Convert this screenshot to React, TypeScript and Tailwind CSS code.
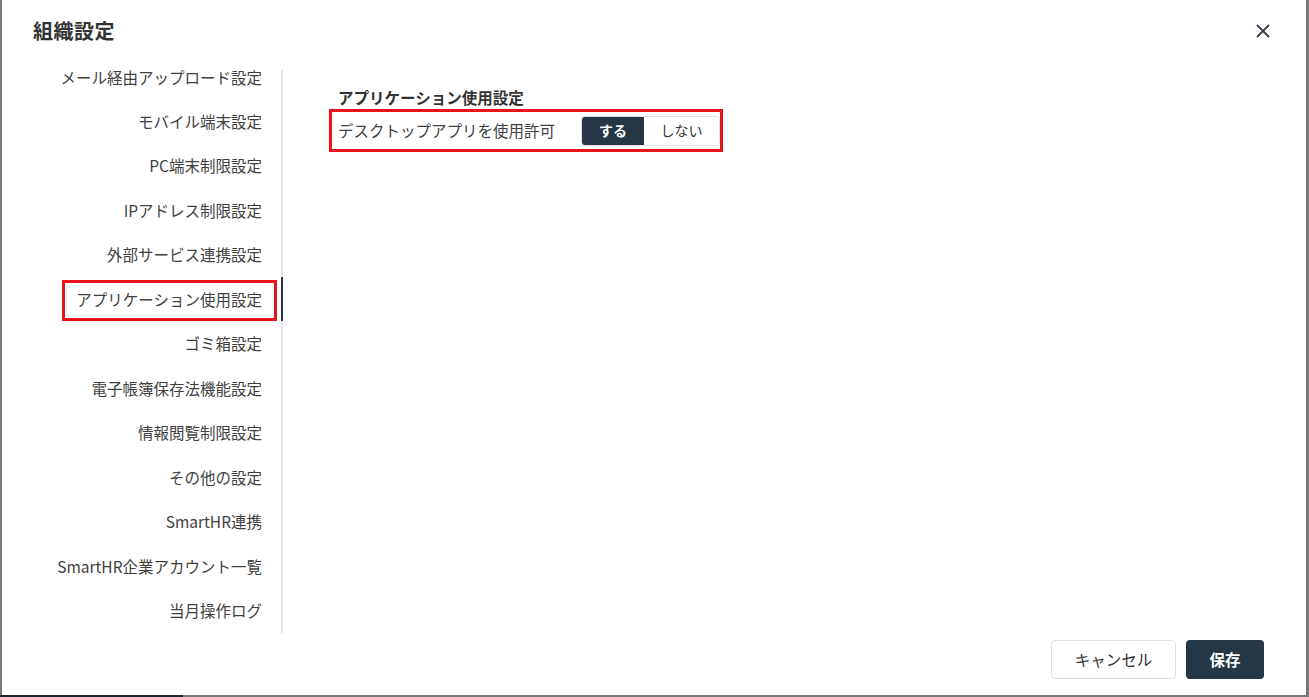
import { X } from "lucide-react";

const menu = [
  "メール経由アップロード設定",
  "モバイル端末設定",
  "PC端末制限設定",
  "IPアドレス制限設定",
  "外部サービス連携設定",
  "アプリケーション使用設定",
  "ゴミ箱設定",
  "電子帳簿保存法機能設定",
  "情報閲覧制限設定",
  "その他の設定",
  "SmartHR連携",
  "SmartHR企業アカウント一覧",
  "当月操作ログ",
];

const font = { fontFamily: '"Noto Sans CJK JP", "Noto Sans", sans-serif' };

export default function App() {
  const active = 5;
  return (
    <div className="h-[697px] w-full flex flex-col bg-[#7a7a7a] overflow-hidden" style={font}>
      <div className="flex-1 flex min-h-0">
        <div className="flex-1 ml-[2px] mr-[3px] bg-white flex flex-col">
          {/* header */}
          <div className="h-[62px] shrink-0 flex items-center justify-between pl-[31px] pr-[32px]">
            <h1 className="text-[20px] font-bold text-[#333] tracking-[0.5px]">組織設定</h1>
            <X className="w-[22px] h-[22px] text-[#36414c]" strokeWidth={2} />
          </div>

          {/* body */}
          <div className="flex flex-1 min-h-0 pt-[8px]">
            <div className="w-[281px]">
              {menu.map((item, i) => (
                <div
                  key={item}
                  className={`flex justify-end pr-[19px] border-r-2 ${
                    i === 0 ? "h-[28.5px] items-start" : "h-[44.5px] items-center"
                  } ${i === active ? "border-[#2a3642]" : "border-[#e1e6ee]"}`}
                >
                  <span
                    className={`relative text-[15.5px] text-[#3f3f3f] ${
                      i === 0 ? "leading-[15px]" : "leading-[22px]"
                    }`}
                  >
                    {item}
                    {i === active && (
                      <span className="absolute -left-[14px] -right-[15px] -top-[8px] -bottom-[11px] border-[3px] border-[#e8141c]" />
                    )}
                  </span>
                </div>
              ))}
            </div>

            <div className="flex-1 pl-[46px] pt-[16px]">
              <h2 className="pl-[9px] text-[15.5px] font-bold text-[#333] leading-[22px]">
                アプリケーション使用設定
              </h2>
              <div className="w-[394px] h-[43px] border-[3px] border-[#e8141c] flex items-center justify-between pl-[6px] pr-0 mt-[1px]">
                <span className="text-[15.5px] text-[#3f3f3f]">デスクトップアプリを使用許可</span>
                <div className="flex h-[30px] rounded-[4px] border border-[#dfe3e8] overflow-hidden">
                  <div className="w-[62px] bg-[#263644] text-white text-[14px] font-bold flex items-center justify-center">
                    する
                  </div>
                  <div className="w-[75px] bg-white text-[#333] text-[14px] flex items-center justify-center">
                    しない
                  </div>
                </div>
              </div>
            </div>
          </div>

          {/* footer */}
          <div className="h-[62px] shrink-0 flex items-start justify-end gap-[10px] pr-[42px] pt-[7px]">
            <button className="w-[125px] h-[39px] rounded-[4px] border border-[#dde1e6] bg-white text-[15.5px] text-[#333]">
              キャンセル
            </button>
            <button className="w-[78px] h-[39px] rounded-[4px] bg-[#253644] text-[15.5px] font-bold text-white">
              保存
            </button>
          </div>
        </div>
      </div>
      <div className="h-[2px] flex">
        <div className="w-[183px] bg-[#1d2730]" />
        <div className="flex-1" />
      </div>
    </div>
  );
}
